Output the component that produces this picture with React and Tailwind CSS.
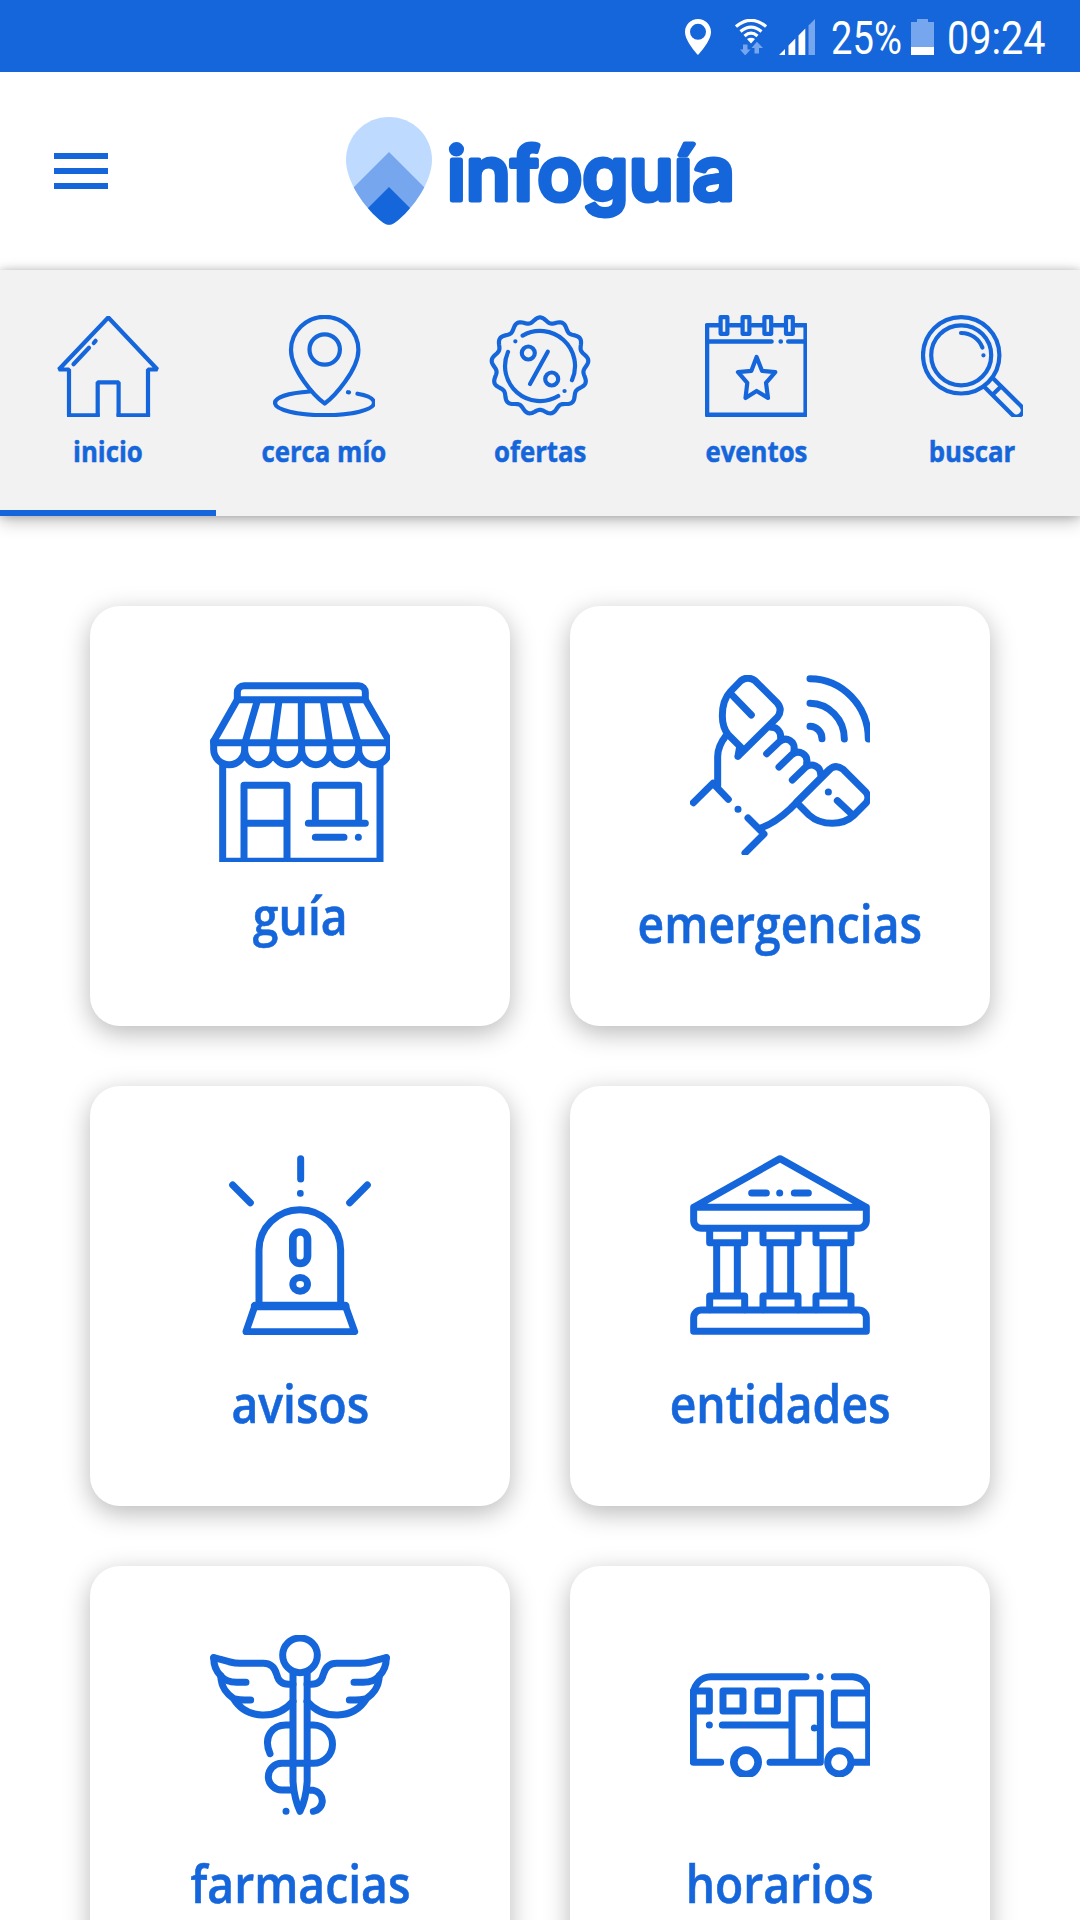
import React from "react";
import clsx from "clsx";

// Scalloped edge of the offers badge, centred on 0,0
const badgeEdge =
  Array.from({ length: 261 }, (_, i) => {
    const angle = (i / 260) * Math.PI * 2;
    const radius = 46.2 + 2.4 * Math.cos(angle * 13);
    const x = (radius * Math.sin(angle)).toFixed(2);
    const y = (-radius * Math.cos(angle)).toFixed(2);
    return `${i === 0 ? "M" : "L"}${x} ${y}`;
  }).join("") + "Z";

const TabIcon = ({ children, viewBox = "0 0 102 102" }) => (
  <svg
    className="w-[102px] h-[102px]"
    viewBox={viewBox}
    fill="none"
    stroke="currentColor"
    strokeWidth="4.2"
    strokeLinecap="round"
    strokeLinejoin="round"
  >
    {children}
  </svg>
);

const CardIcon = ({ children }) => (
  <svg
    className="w-[180px] h-[180px]"
    viewBox="0 0 540 540"
    fill="none"
    stroke="currentColor"
    strokeWidth="21"
    strokeLinecap="round"
    strokeLinejoin="round"
  >
    {children}
  </svg>
);

const HomeIcon = () => (
  <TabIcon>
    <path d="M51.3 2.5L1.800 54.5H12V100.5H40.7V67.3H61.6V100.5H91V54.5H100.400Z" strokeLinejoin="bevel" />
    <path d="M10 100.5H42.800M59.500 100.5H93.100" strokeLinecap="butt" />
    <path d="M16.5 49.3L32 32.7M36.8 28L38.6 25.8" />
  </TabIcon>
);

const NearIcon = () => (
  <TabIcon>
    <path d="M51.7 88.5C42 82 18 55 18 35A33.7 33.2 0 0 1 85.4 35C85.4 55 61 82 51.7 88.5Z" />
    <circle cx="51.7" cy="34.5" r="15.2" />
    <path d="M37 76.5C15 78 2 82.5 2 88C2 95 25 100.2 51.7 100.2S101 95 101 88C101 83.5 95 80.5 84.5 78.7M75 77.2L76 77.4" />
  </TabIcon>
);

const OffersIcon = () => (
  <TabIcon viewBox="-51 -51 102 102">
    <path d={badgeEdge} />
    <path d="M-17.4 -30.4A35 35 0 0 1 32 14.2M18.2 30A35 35 0 0 1 -32 -14" />
    <path d="M-10 18L7.8 -14.3M-24.7 -24.7h.1M24.5 25h.1" />
    <circle cx="-11.7" cy="-13" r="6.5" />
    <circle cx="11.7" cy="13" r="6.5" />
  </TabIcon>
);

const EventsIcon = () => (
  <TabIcon>
    <path d="M14 10.3H2V99.8H100.7V10.3H89M25 10.3H36M47 10.3H58M69 10.3H79" strokeWidth="4.6" />
    <rect x="15.6" y="2.2" width="6.8" height="16.6" />
    <rect x="37.6" y="2.2" width="6.8" height="16.6" />
    <rect x="59.4" y="2.2" width="6.8" height="16.6" />
    <rect x="81" y="2.2" width="6.8" height="16.6" />
    <path d="M2 26.5H66.5M75.7 26.5h.1M83.3 26.5H101" strokeWidth="4.6" />
    <path d="M51.6 42L57 55.8L70.3 57.2L61 67.8L63 83L51.6 76L40.5 83L42.3 67.8L33 57.2L46.4 55.8Z" />
  </TabIcon>
);

const SearchIcon = () => (
  <TabIcon>
    <circle cx="40.2" cy="40.3" r="38.2" />
    <circle cx="40.2" cy="40.3" r="30" />
    <path d="M40 18A22.5 22.5 0 0 1 61.4 32.5M62.4 40.3h.1" />
    <path d="M64 72.5L91 99.5A6 6 0 0 0 100 91L72.5 63.7M72.3 79L80 71.5" />
  </TabIcon>
);

const StoreIcon = () => (
  <CardIcon>
    <path d="M82 53V31a20 20 0 0 1 20-20H446a20 20 0 0 1 20 20V53Z" />
    <path d="M82 53L11 178M466 53L538 178M11 182H538" />
    <path d="M142 56L105 182M207 56L190 182M274 56V182M340 56L359 182M405 56L444 182" />
    <path d="M11 178V202A46.5 46 0 0 0 104 202V182M104 202A42.5 46 0 0 0 189 202V182M189 202A43 46 0 0 0 275 202V182M275 202A42.5 46 0 0 0 360 202V182M360 202A43 46 0 0 0 446 202V182M446 202A46 46 0 0 0 538 202V178" />
    <path d="M38 246V538H510V246" strokeLinejoin="miter" />
    <path d="M102 538V310H231V538M102 424H231" />
    <path d="M316 424V310H446V424M295 424H466M316 466H402M445 466h.1" />
  </CardIcon>
);

const PhoneIcon = () => (
  <CardIcon>
    <path d="M360 11A176 181 0 0 1 535 192M360 85A104 107 0 0 1 463 192M360 154A37 37 0 0 1 396 191" />
    <path d="M144 244L262 127Q279 105 262 84L195 17Q173 2 153 17L121 50C104 68 97 95 97 122C97 145 103 165 115 179L154 218M149 215L144 244L160 222" />
    <path d="M122 56L184 120" />
    <path d="M108 182C90 205 83 225 83 245V334M10 383L69 325L115 373M144 403h.1M174 429L222 477L165 534" />
    <path d="M210 460C245 448 270 430 300 402L417 285" />
    <path d="M320 382L417 285Q437 266 459 283L528 352Q540 368 528 384L490 422C472 439 450 445 427 445C400 445 377 438 357 420L325 388" />
    <path d="M442 377L488 420M415 351h.1" />
    <path d="M244 157C262 156 274 172 272 190" />
    <path d="M230 236L268 200C290 182 316 200 312 226" />
    <path d="M267 276L305 239C328 221 355 240 350 264" />
    <path d="M307 315L345 278C366 260 392 276 392 298" />
  </CardIcon>
);

const SirenIcon = () => (
  <CardIcon>
    <path d="M272 11V72M68 90L121 143M472 90L419 143" />
    <path d="M270 114h2v2h-2z" strokeWidth="18" />
    <path d="M147 450V285A122.5 121 0 0 1 392 285V450" />
    <path d="M135 452H406L434 530H108Z" />
    <path d="M135 453H406" strokeWidth="25" />
    <rect x="248.5" y="231" width="44" height="94" rx="22" strokeWidth="23" />
    <ellipse cx="270.5" cy="388" rx="22" ry="20.5" />
  </CardIcon>
);

const Column = ({ x }) => (
  <g transform={`translate(${x} 0)`}>
    <path d="M59 222V263H164V222M59 464V423H164V464M80 263V423M142 263V423" />
  </g>
);

const BankIcon = () => (
  <CardIcon>
    <path d="M11 157L270 11L529 157V197a23 23 0 0 1-23 23H34a23 23 0 0 1-23-23ZH529" />
    <path d="M185 114H229M269 114h.1M313 114H355" />
    <Column x={0} />
    <Column x={160} />
    <Column x={319} />
    <path d="M11 529V488a23 23 0 0 1 23-23H506a23 23 0 0 1 23 23V529Z" />
  </CardIcon>
);

const Wing = () => (
  <>
    <path d="M11 68C28 72 45 77 60 81Q75 85 90 85H160C185 85 195 100 200 118C205 140 218 148 235 148H249" />
    <path d="M11 68C11 90 18 108 32 122C45 138 60 142 80 142H108" />
    <path d="M32 122C34 160 52 177 70 190C80 195 90 195 122 195M70 190C110 255 200 255 249 199" />
  </>
);

const PharmacyIcon = () => (
  <CardIcon>
    <circle cx="270" cy="61" r="52" />
    <Wing />
    <g transform="translate(540 0) scale(-1 1)">
      <Wing />
    </g>
    <path d="M249 113V440Q253 492 270 529Q288 492 291.5 440V113" />
    <path d="M180 356C158 305 188 270 228 270H246M294 270H310A57 57 0 0 1 310 385H215A40 40 0 0 0 215 465H246M300 466H311A32 32 0 0 1 310 529M228 529h.1" />
  </CardIcon>
);

const BusIcon = () => (
  <svg
    className="w-[180px] h-[104px] my-[38px]"
    viewBox="0 0 540 312"
    fill="none"
    stroke="currentColor"
    strokeWidth="21"
    strokeLinecap="round"
    strokeLinejoin="round"
  >
    <path d="M92 268H10V60C15 30 35 12 62 11H348M390 11h.1M433 11H488C515 13 533 30 536 60V268H490" />
    <path d="M10 54H58V114H10" />
    <rect x="99" y="54" width="60" height="60" />
    <rect x="204" y="54" width="58" height="60" />
    <path d="M58 156h.1M97 156H306M306 268V60H391V268M240 268H391M373 165h.1M540 60H433V156H540" />
    <circle cx="168" cy="268" r="36.5" strokeWidth="23" />
    <circle cx="448" cy="268" r="35" />
  </svg>
);

const StatusBar = () => (
  <div className="flex items-center justify-end h-[72px] pr-[35px] pt-0.5 bg-[#1566db] text-white font-['Roboto',sans-serif] text-[46px] leading-[72px]">
    <svg className="w-[26px] h-9 mr-6" viewBox="0 0 26 36" fill="currentColor">
      <path
        fillRule="evenodd"
        d="M13 0C5.8 0 0 5.800 0 13c0 9.500 13 23 13 23s13-13.500 13-23C26 5.800 20.200 0 13 0Zm0 4.800a8 8 0 1 1 0 16 8 8 0 0 1 0-16Z"
      />
    </svg>
    <svg className="w-8 h-9 mr-3" viewBox="0 0 32 36" fill="none" stroke="currentColor" strokeWidth="3.2">
      <path d="M1 7.600Q16 -5 31 7.600M5.500 12.500Q16 3.600 26.500 12.500M9.500 17Q16 11.400 22.500 17" />
      <path d="M12 20Q16 17.500 20 20L16 24.500Z" fill="currentColor" stroke="none" />
      <path
        d="M8 25.500h4.500v5h3L10.200 36.500L5 30.500h3zM19.500 34.500h4.500v-5.500h4L21.900 22.800L16.500 29h3z"
        fill="#76a6ee"
        stroke="none"
      />
    </svg>
    <svg className="w-9 h-9 mr-[16px]" viewBox="0 0 36 36" fill="currentColor">
      <path d="M0 36L6 30V36ZM9.500 26.500L16.300 19.500V36H9.500ZM19.500 16.500L26.300 9.500V36H19.500Z" />
      <path d="M29.500 6.500L36 0V36H29.500Z" fill="#76a6ee" />
    </svg>
    <div className="w-[71px] mr-[9px] pt-0.5 whitespace-nowrap">
      <span className="inline-block origin-left scale-x-[0.83]">25%</span>
    </div>
    <svg className="w-[23px] h-9 mr-[13px]" viewBox="0 0 23 36">
      <path d="M6 0H17V3H23V28H0V3H6Z" fill="#76a6ee" />
      <path d="M0 28H23V36H0Z" fill="currentColor" />
    </svg>
    <div className="w-[98px] pt-0.5 whitespace-nowrap">
      <span className="inline-block origin-left scale-x-[0.86]">09:24</span>
    </div>
  </div>
);

const Logo = () => (
  <svg className="w-[400px] h-[120px]" viewBox="0 0 400 120">
    <clipPath id="logo-drop">
      <path d="M43 6C67 6 86 25 86 49C86 70 68 97 49 111.500Q43 116 37 111.500C18 97 0 70 0 49C0 25 19 6 43 6Z" />
    </clipPath>
    <g clipPath="url(#logo-drop)">
      <path d="M0 6H86V114H0Z" fill="#bfdaff" />
      <path d="M43 41L86 84V114H0V84Z" fill="#76a6ee" />
      <path d="M43 76L81 114H5Z" fill="#1566db" />
    </g>
    <text
      x="101"
      y="88.500"
      textLength="288"
      lengthAdjust="spacingAndGlyphs"
      className="font-['Inter',sans-serif] font-medium text-[74px]"
      fill="currentColor"
      stroke="currentColor"
      strokeWidth="5"
      strokeLinejoin="round"
    >
      infoguía
    </text>
  </svg>
);

const Header = () => (
  <header className="flex items-center h-[198px] pl-[54px] bg-white">
    <button className="flex flex-col gap-[9px] w-[54px] mr-[238px]" aria-label="menú">
      <span className="h-1.5 bg-[#1566db]" />
      <span className="h-1.5 bg-[#1566db]" />
      <span className="h-1.5 bg-[#1566db]" />
    </button>
    <Logo />
  </header>
);

const tabs = [
  { label: "inicio", Icon: HomeIcon, active: true },
  { label: "cerca mío", Icon: NearIcon },
  { label: "ofertas", Icon: OffersIcon },
  { label: "eventos", Icon: EventsIcon },
  { label: "buscar", Icon: SearchIcon },
];

const cards = [
  { label: "guía", Icon: StoreIcon, top: "pt-[76px]", gap: "mt-[23px]" },
  { label: "emergencias", Icon: PhoneIcon },
  { label: "avisos", Icon: SirenIcon },
  { label: "entidades", Icon: BankIcon },
  { label: "farmacias", Icon: PharmacyIcon },
  { label: "horarios", Icon: BusIcon },
];

const App = () => {
  return (
    <div className="w-[1080px] h-[1920px] overflow-hidden bg-white text-[#1566db] font-['Open_Sans',sans-serif]">
      <StatusBar />
      <Header />

      <nav className="relative grid grid-cols-5 h-[246px] bg-[#f2f2f2] shadow-[0_5px_16px_rgba(0,0,0,0.26),0_0_8px_rgba(0,0,0,0.18)]">
        {tabs.map(({ label, Icon, active }) => (
          <button
            key={label}
            className={clsx(
              "flex flex-col items-center pt-[45px] border-b-6",
              active ? "border-[#1566db]" : "border-transparent"
            )}
          >
            <Icon />
            <span className="mt-[18px] font-bold text-[28px] leading-8 whitespace-nowrap scale-x-[0.92] [-webkit-text-stroke:0.5px_#1566db]">
              {label}
            </span>
          </button>
        ))}
      </nav>

      <main className="grid grid-cols-2 gap-[60px] px-[90px] pt-[90px]">
        {cards.map(({ label, Icon, top = "pt-[69px]", gap = "mt-[38px]" }) => (
          <div
            key={label}
            className={clsx(
              "flex flex-col items-center h-[420px] rounded-[30px] bg-white shadow-[0_7px_26px_rgba(0,0,0,0.28)]",
              top
            )}
          >
            <Icon />
            <span
              className={clsx(
                "font-semibold text-[52px] leading-[60px] whitespace-nowrap scale-x-[0.89] [-webkit-text-stroke:0.6px_#1566db]",
                gap
              )}
            >
              {label}
            </span>
          </div>
        ))}
      </main>
    </div>
  );
};

export default App;
